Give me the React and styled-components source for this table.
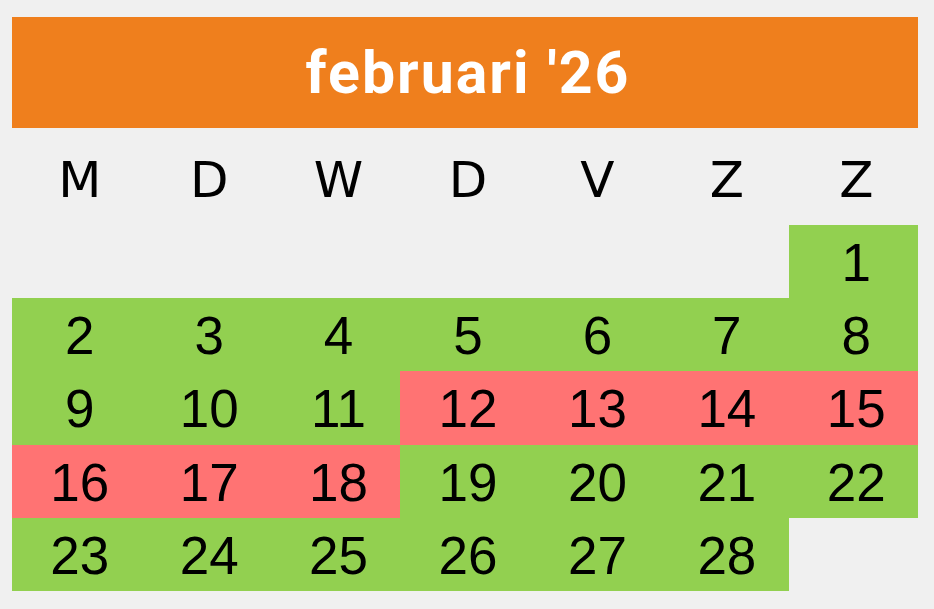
import React from "react";
import styled, { createGlobalStyle } from "styled-components";

const GlobalStyle = createGlobalStyle`
  html, body {
    margin: 0;
    padding: 0;
    background: #f0f0f0;
  }
`;

const Page = styled.div`
  width: 934px;
  height: 609px;
  padding: 17px 16px 0 12px;
  box-sizing: border-box;
`;

const Title = styled.div`
  height: 111px;
  background: #ef7f1d;
  color: #ffffff;
  display: flex;
  align-items: center;
  justify-content: center;
  padding-left: 6px;
  font-family: "Roboto", "Liberation Sans", sans-serif;
  font-weight: 700;
  font-size: 59px;
  letter-spacing: 2px;
`;

const DayRow = styled.div`
  display: grid;
  grid-template-columns: repeat(7, 1fr);
  height: 97px;
`;

const DayName = styled.div`
  display: flex;
  align-items: center;
  justify-content: center;
  padding: 6px 0 0 6px;
  font-family: "DejaVu Sans", sans-serif;
  font-size: 50px;
  color: #000;
`;

const Grid = styled.div`
  display: grid;
  grid-template-columns: repeat(7, 1fr);
  grid-template-rows: repeat(5, 73.2px);
`;

const colors = {
  green: "#92d050",
  red: "#ff7373",
  none: "transparent",
};

const Cell = styled.div`
  display: flex;
  align-items: center;
  justify-content: center;
  padding: 2px 0 0 6px;
  background: ${(p) => colors[p.$tone]};
  font-family: "Liberation Sans", Arial, sans-serif;
  font-size: 53px;
  color: #000;
`;

const days = ["M", "D", "W", "D", "V", "Z", "Z"];
const holiday = [12, 13, 14, 15, 16, 17, 18];

const cells = [];
for (let i = 0; i < 6; i++) cells.push(null);
for (let d = 1; d <= 28; d++) cells.push(d);
while (cells.length < 35) cells.push(null);

const App = () => (
  <>
    <GlobalStyle />
    <Page>
      <Title>februari '26</Title>
      <DayRow>
        {days.map((d, i) => (
          <DayName key={i}>{d}</DayName>
        ))}
      </DayRow>
      <Grid>
        {cells.map((d, i) => (
          <Cell
            key={i}
            $tone={d === null ? "none" : holiday.includes(d) ? "red" : "green"}
          >
            {d}
          </Cell>
        ))}
      </Grid>
    </Page>
  </>
);

export default App;
